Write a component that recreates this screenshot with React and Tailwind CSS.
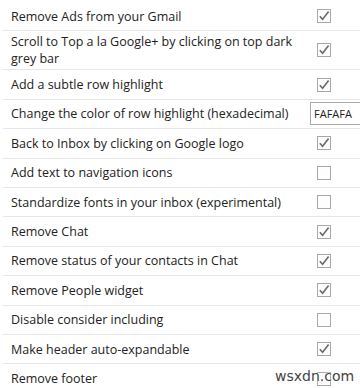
import React from "react";

const rows = [
  ["Remove Ads from your Gmail", true],
  ["Scroll to Top a la Google+ by clicking on top dark grey bar", true],
  ["Add a subtle row highlight", true],
  ["Change the color of row highlight (hexadecimal)", "input"],
  ["Back to Inbox by clicking on Google logo", true],
  ["Add text to navigation icons", false],
  ["Standardize fonts in your inbox (experimental)", false],
  ["Remove Chat", true],
  ["Remove status of your contacts in Chat", true],
  ["Remove People widget", true],
  ["Disable consider including", false],
  ["Make header auto-expandable", true],
  ["Remove footer", false],
];

function Box({ checked }) {
  return (
    <svg width="14" height="14" viewBox="0 0 14 14" className="block">
      <rect x="0.5" y="0.5" width="13" height="13" fill="#fdfdfd" stroke="#a8a8a8" />
      {checked && (
        <path d="M2.8 7.2 L5.6 10.2 L11.6 2.6" fill="none" stroke="#6a6a6a" strokeWidth="1.6" />
      )}
    </svg>
  );
}

export default function App() {
  return (
    <div
      className="w-[360px] h-[388px] overflow-hidden bg-white relative pt-[2px]"
      style={{ fontFamily: '"Open Sans", "Noto Sans", sans-serif' }}
    >
      {rows.map(([label, v], i) => (
        <div
          key={i}
          className={
            "flex items-center min-h-[29.4px] ml-[3px] " +
            (i < rows.length - 1 ? "border-b border-[#e6e6e6]" : "")
          }
        >
          <div className="flex-1 pl-[8px] pr-[12px] py-[2px] text-[12.5px] leading-[17px] text-[#222]">
            {label}
          </div>
          <div className="w-[50px] shrink-0 flex items-center">
            {v === "input" ? (
              <div className="w-[60px] h-[23px] border border-[#aaa] bg-white text-[11px] text-[#222] pl-[3px] flex items-center shrink-0">
                FAFAFA
              </div>
            ) : (
              <div className="ml-[7px]">
                <Box checked={v} />
              </div>
            )}
          </div>
        </div>
      ))}
      <div
        className="absolute left-[275px] top-[369px] text-[14px] text-[#444] leading-none"
        style={{ fontFamily: '"DejaVu Sans", sans-serif', textShadow: "0 0 2px #fff, 0 0 2px #fff" }}
      >
        wsxdn.com
      </div>
    </div>
  );
}
